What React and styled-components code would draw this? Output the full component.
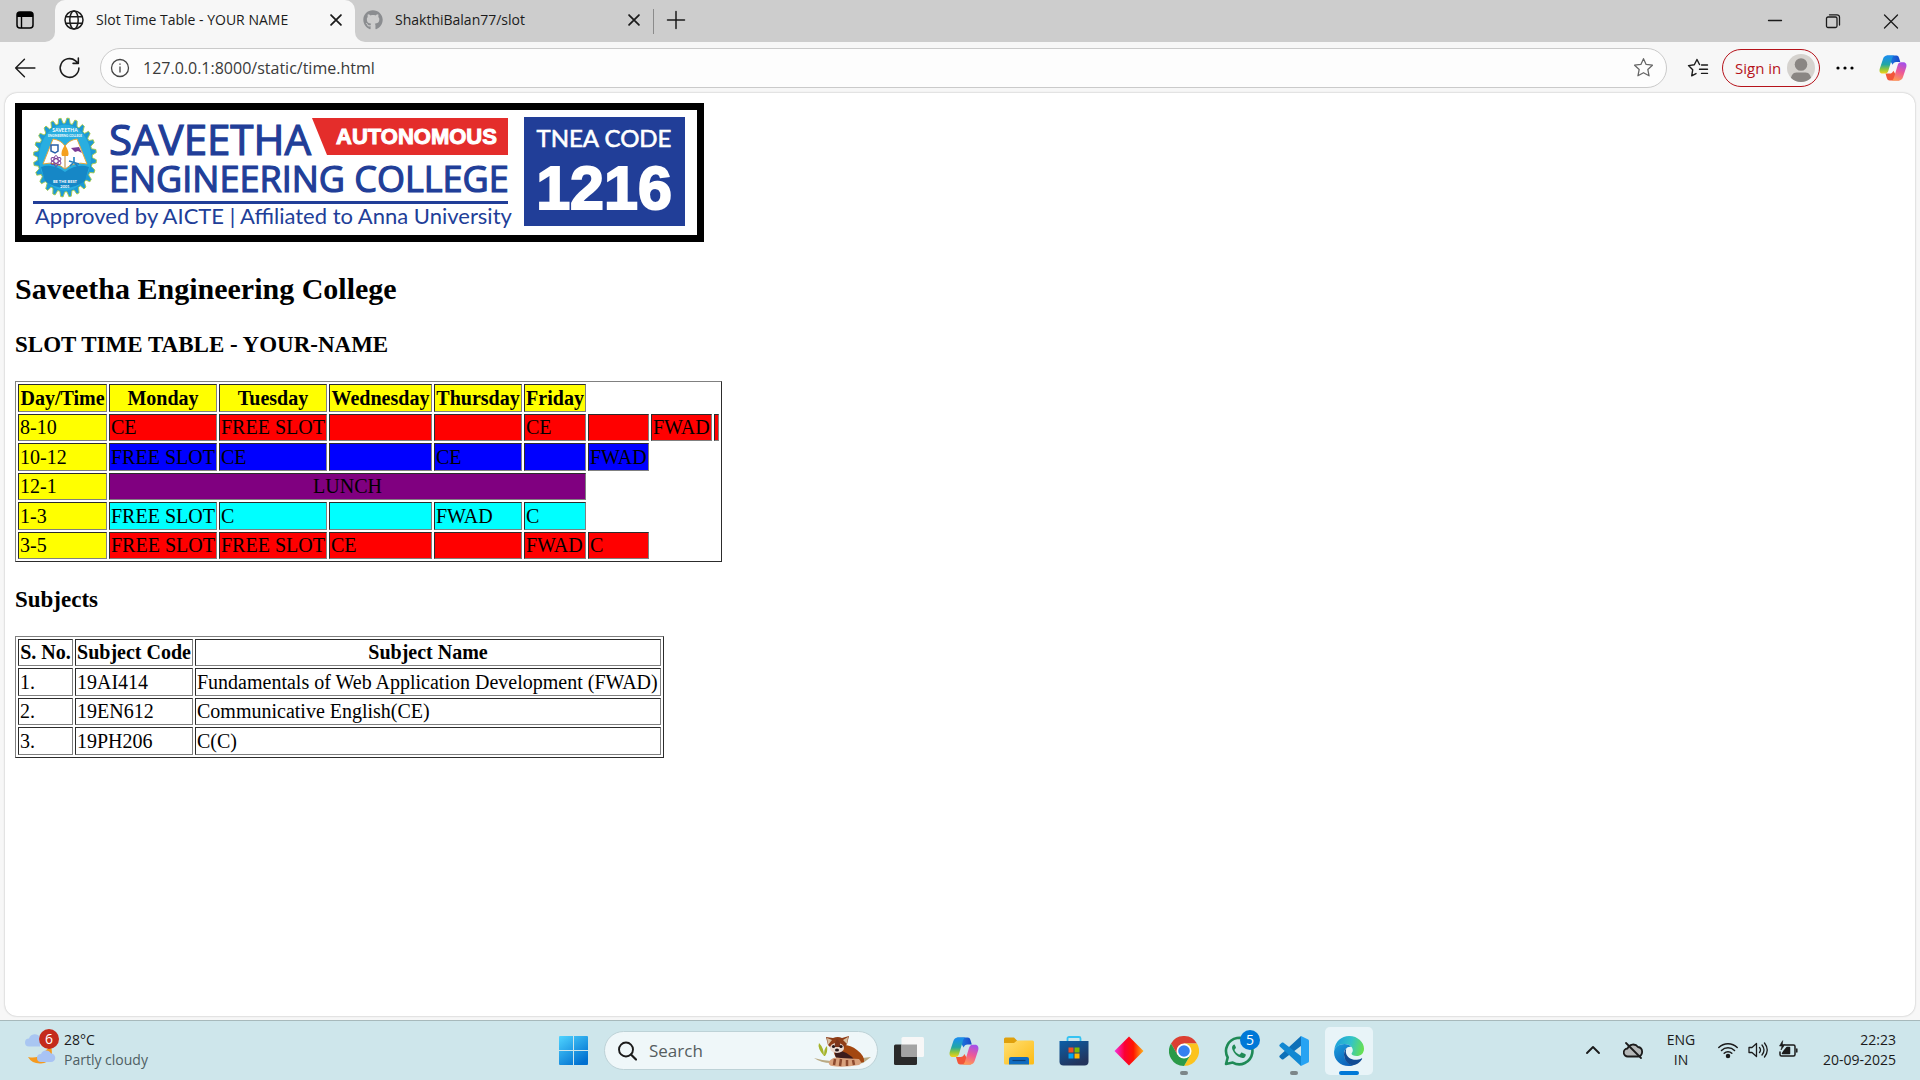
import React from "react";
import styled, { createGlobalStyle } from "styled-components";
import { FaGithub } from "react-icons/fa";

const UI_FONT = '"Open Sans", "Noto Sans", sans-serif';

const GlobalStyle = createGlobalStyle`
  *, *::before, *::after { box-sizing: border-box; }
  body { margin: 0; background: #f7f7f7; }
  button { border: 0; padding: 0; background: none; font: inherit; color: inherit; }
  svg { display: block; flex: none; }
`;

const Screen = styled.div`
  min-height: 100vh;
  display: flex;
  flex-direction: column;
  font-family: ${UI_FONT};
  color: #1b1b1b;
`;

/* ---------- Browser frame ---------- */

const TabStrip = styled.header`
  display: flex;
  height: 42px;
  background: #f7f7f7;
  font-size: 14px;
`;

const TabActions = styled.div`
  width: 55px;
  display: flex;
  align-items: center;
  padding: 0 16px 2px;
  background: #cdcdcd;
  border-bottom-right-radius: 10px;
`;

const ActiveTabSlot = styled.div`
  width: 300px;
  background: linear-gradient(#cdcdcd 50%, #f7f7f7 50%);
`;

const Tab = styled.div`
  display: flex;
  align-items: center;
  height: 42px;
  width: ${(p) => (p.$active ? "300px" : "298px")};
  padding: 0 8px 2px ${(p) => (p.$active ? "9px" : "8px")};
  background: ${(p) => (p.$active ? "#f7f7f7" : "transparent")};
  border-radius: 10px 10px 0 0;
`;

const TabTitle = styled.span`
  flex: 1;
  margin-left: 12px;
  padding-bottom: 2px;
  white-space: nowrap;
`;

const InactiveStrip = styled.div`
  flex: 1;
  display: flex;
  align-items: center;
  background: #cdcdcd;
  border-bottom-left-radius: 10px;
`;

const TabDivider = styled.span`
  width: 1px;
  height: 25px;
  background: #8b8b8b;
`;

const NewTab = styled.button`
  margin-left: 12px;
  padding-bottom: 2px;
`;

const WindowControls = styled.div`
  display: flex;
  margin-left: auto;
`;

const WindowButton = styled.button`
  width: 58px;
  height: 42px;
  display: grid;
  place-items: center;
`;

const Toolbar = styled.nav`
  display: flex;
  align-items: center;
  height: 51px;
  padding: 0 13px 0 14px;
  background: #f7f7f7;
`;

const NavButton = styled.button`
  width: 22px;
  height: 22px;
  margin-right: 22px;
  display: grid;
  place-items: center;
`;

const AddressBar = styled.label`
  flex: 1;
  display: flex;
  align-items: center;
  height: 40px;
  margin-left: -2px;
  padding: 0 12px 0 9px;
  background: #fdfdfd;
  border: 1px solid #cacaca;
  border-radius: 20px;
`;

const AddressInput = styled.input`
  flex: 1;
  min-width: 0;
  margin-left: 13px;
  padding: 0;
  border: 0;
  outline: 0;
  background: transparent;
  font-family: ${UI_FONT};
  font-size: 16px;
  color: #3a3a3a;
`;

const ToolbarEnd = styled.div`
  display: flex;
  align-items: center;
  margin-left: 20px;
`;

const SignIn = styled.button`
  display: flex;
  align-items: center;
  justify-content: space-between;
  width: 98px;
  height: 38px;
  margin: 0 16px 0 13px;
  padding: 0 4px 0 12px;
  border: 1px solid #b5131b;
  border-radius: 20px;
  font-size: 15px;
  color: #b5131b;
  white-space: nowrap;
`;

const MenuButton = styled.button`
  margin-right: 25px;
`;

/* ---------- Time table page ---------- */

const PageCard = styled.main`
  flex: 1;
  margin: 0 5px 4px;
  padding: 10px;
  background: #fff;
  border-radius: 12px;
  box-shadow: 0 0 2px rgba(0, 0, 0, 0.3);
  font-family: "Liberation Serif", "Times New Roman", serif;
  font-size: 20px;
  color: #000;
`;

const Banner = styled.figure`
  width: max-content;
  margin: 0;
  border: 7px solid #000;
`;

const PageTitle = styled.h2`
  margin: 30px 0 25px;
  font-size: 30px;
  line-height: 34px;
`;

const SectionTitle = styled.h3`
  margin: 24px 0 23px;
  font-size: 23px;
  line-height: 27px;
`;

const DataTable = styled.table`
  table-layout: fixed;
  width: ${(p) => p.$width}px;
  border: 1px solid;
  border-color: #808080 #2c2c2c #2c2c2c #808080;
  border-collapse: separate;
  border-spacing: 2px;
  line-height: 23px;
  white-space: nowrap;

  tr { height: 27px; }
  tr:nth-child(${(p) => p.$tall}) { height: 28px; }
`;

const Column = styled.col`
  width: ${(p) => p.$width}px;
`;

const cellBorder = `
  padding: 0 1px;
  border: 1px solid;
  border-color: #2c2c2c #808080 #808080 #2c2c2c;
`;

const HeadCell = styled.th`
  ${cellBorder}
  background: ${(p) => p.$fill || "transparent"};
`;

const Cell = styled.td`
  ${cellBorder}
  background: ${(p) => p.$fill || "transparent"};
  text-align: ${(p) => (p.$center ? "center" : "left")};
`;

/* ---------- Taskbar ---------- */

const Taskbar = styled.footer`
  display: grid;
  grid-template-columns: 1fr auto 1fr;
  align-items: center;
  height: 60px;
  padding-left: 2px;
  border-top: 1px solid #a7b9bb;
  background: #cee6eb;
  font-size: 14px;
  line-height: 20px;
`;

const Weather = styled.button`
  display: flex;
  gap: 8px;
  justify-self: start;
  margin-left: 23px;
  padding-bottom: 2px;
  text-align: left;
`;

const WeatherArt = styled.span`
  position: relative;
  width: 31px;
`;

const Badge = styled.span`
  position: absolute;
  top: ${(p) => p.$top}px;
  right: ${(p) => p.$right}px;
  width: 20px;
  height: 20px;
  border-radius: 50%;
  background: ${(p) => p.$fill};
  color: #fff;
  text-align: center;
`;

const Muted = styled.span`
  display: block;
  color: #4f6064;
`;

const TaskGroup = styled.div`
  display: flex;
  align-items: center;
  gap: 7px;
`;

const TaskButton = styled.button`
  position: relative;
  display: grid;
  place-items: center;
  width: 48px;
  height: 48px;
  border-radius: 5px;
  background: ${(p) => (p.$active ? "#e8f4f8" : "transparent")};

  &::after {
    content: "";
    display: ${(p) => (p.$running ? "block" : "none")};
    position: absolute;
    bottom: 0;
    left: 50%;
    width: ${(p) => (p.$active ? "20px" : "8px")};
    height: 4px;
    border-radius: 2px;
    transform: translateX(-50%);
    background: ${(p) => (p.$active ? "#0078d7" : "#7c8688")};
  }
`;

const SearchBox = styled.label`
  display: flex;
  align-items: center;
  width: 274px;
  height: 39px;
  padding: 0 4px 0 12px;
  border: 1px solid #bdd2d7;
  border-radius: 20px;
  background: #eff7f9;
`;

const SearchInput = styled.input`
  flex: 1;
  min-width: 0;
  margin-left: 12px;
  padding: 0;
  border: 0;
  outline: 0;
  background: transparent;
  font-family: ${UI_FONT};
  font-size: 17px;
  &::placeholder { color: #555d5f; opacity: 1; }
`;

const Tray = styled.div`
  display: flex;
  align-items: center;
  justify-self: end;
  padding: 0 24px 2px 0;
`;

const TrayButton = styled.button`
  display: grid;
  place-items: center;
  width: ${(p) => p.$width}px;
`;

const Clock = styled.time`
  width: 89px;
  text-align: right;
`;

/* ---------- Icons ---------- */

const Line = ({ size = 20, w = 1.4, children, color = "#1b1b1b" }) => (
  <svg width={size} height={size} viewBox="0 0 20 20" fill="none" stroke={color} strokeWidth={w} strokeLinecap="round" strokeLinejoin="round">
    {children}
  </svg>
);

const TabMenuIcon = () => (
  <svg width="18" height="18" viewBox="0 0 18 18">
    <rect x="1" y="1" width="16" height="16" rx="3" fill="none" stroke="#000" strokeWidth="1.5" />
    <path d="M1 6V4a3 3 0 0 1 3-3h10a3 3 0 0 1 3 3v2z" />
    <path d="M5.5 5v12" stroke="#000" strokeWidth="1.4" />
  </svg>
);

const GlobeIcon = () => (
  <Line w={1.5}>
    <circle cx="10" cy="10" r="9" />
    <ellipse cx="10" cy="10" rx="4.2" ry="9" />
    <path d="M1.8 6.8h16.4M1.8 13.2h16.4" />
  </Line>
);

const CrossIcon = ({ size = 20, w = 1.6 }) => (
  <Line size={size} w={w}><path d="M5.500 5.500l9 9M14.500 5.500l-9 9" /></Line>
);

const starPath = "M10 1.6l2.5 5.5 6 .7-4.4 4.1 1.2 6L10 15l-5.3 2.9 1.2-6L1.500 7.800l6-.7z";

const CopilotIcon = ({ size, id }) => (
  <svg width={size} height={size} viewBox="0 0 30 30">
    <defs>
      <linearGradient id={`${id}a`} x1="0" y1="0" x2="0" y2="1">
        <stop offset="0.1" stopColor="#1b90e8" /><stop offset="0.5" stopColor="#23a7a4" />
        <stop offset="0.75" stopColor="#8cc63e" /><stop offset="1" stopColor="#f5d21a" />
      </linearGradient>
      <linearGradient id={`${id}b`} x1="0.6" y1="0" x2="0.3" y2="1">
        <stop offset="0" stopColor="#a650e8" /><stop offset="0.5" stopColor="#ee5a96" />
        <stop offset="1" stopColor="#ff9b52" />
      </linearGradient>
      <linearGradient id={`${id}c`} x1="0" y1="0" x2="1" y2="0">
        <stop offset="0" stopColor="#1b8be6" /><stop offset="1" stopColor="#1a45c8" />
      </linearGradient>
    </defs>
    <path d="M8 1.500h10.500c2 0 2.600 1.300 3.100 3l1.200 4h-4.300c-2 0-3.200 1-3.800 3z" fill={`url(#${id}c)`} />
    <path d="M22 28.500H11.500c-2 0-2.700-1.300-3.200-3L7 21h4.500c2 0 3.200-1 3.800-3z" fill="#f2563a" />
    <path d="M9 1.500h7.500c-1.600.5-2.200 2-2.800 4l-3.600 12.200c-.7 2.300-1.700 3.300-3.800 3.300H4c-3 0-4-2.300-3.200-5.300L4.200 5.500C5 2.800 6.500 1.500 9 1.500z" fill={`url(#${id}a)`} />
    <path d="M21 28.500h-7.500c1.600-.5 2.200-2 2.800-4l3.600-12.200c.7-2.300 1.700-3.500 3.800-3.500H26c3 0 4 2.500 3.200 5.500l-3.400 10.200c-.8 2.700-2.300 4-4.800 4z" fill={`url(#${id}b)`} />
  </svg>
);

const RedPandaArt = () => (
  <svg width="60" height="34" viewBox="0 0 60 34">
    <path d="M1 24q16 5 30 2l27-3-8 6q-24 4-32 0Q8 29 1 24z" fill="#b9aa84" />
    <path d="M11 22Q4 14 6 9q5 5 5 13q0-8 3-10q1 6-2 10z" fill="#a5b42b" />
    <path d="M20 13q14-5 24 3q8 6 7 12q-14 4-25-1q-6-6-6-14z" fill="#a34710" />
    <path d="M22 16q14 1 20 11l-17-1q-4-4-3-10z" fill="#3c1c1c" />
    <path d="M16 28q3-6 12-4l18 1q4 4 0 6q-16 3-27 1q-4-1-3-4z" fill="#d9a17c" />
    <path d="M22 25l-1 6M28 25l-1 7M34 26v6M40 26l1 5" stroke="#8d4a2e" strokeWidth="2.500" />
    <path d="M13 3l7 1q5-2 9 0l7-2-2 8-4 5q-6 5-11 0l-4-4z" fill="#8e3d18" />
    <path d="M14 4l5 2-4 5zM35 3l-5 3 4 4z" fill="#d9c0a0" />
    <ellipse cx="24" cy="14" rx="7" ry="5" fill="#ead9d0" />
    <path d="M24 5q-3 4-2 8h5q1-5-3-8z" fill="#7c351c" />
    <circle cx="20.500" cy="12.500" r="1.600" fill="#26181b" /><circle cx="28" cy="12.500" r="1.600" fill="#26181b" />
    <ellipse cx="24" cy="16" rx="2" ry="1.500" fill="#26181b" />
  </svg>
);

const WindowsIcon = () => (
  <svg width="29" height="29" viewBox="0 0 29 29">
    <defs><linearGradient id="win" x1="0" y1="0" x2="0.7" y2="1"><stop offset="0" stopColor="#4fd4ff" /><stop offset="1" stopColor="#0070d0" /></linearGradient></defs>
    <path d="M1 0h13v14H0V1a1 1 0 0 1 1-1zM15 0h13a1 1 0 0 1 1 1v13H15zM0 15h14v14H1a1 1 0 0 1-1-1zM15 15h14v13a1 1 0 0 1-1 1H15z" fill="url(#win)" />
  </svg>
);

const TaskViewIcon = () => (
  <svg width="30" height="28" viewBox="0 0 30 28">
    <rect x="0" y="7.500" width="23" height="20.500" rx="1.500" fill="#2a2a2a" />
    <rect x="7.500" y="0" width="22.500" height="20" rx="1.500" fill="#f7f7f7" />
    <rect x="7.500" y="7.500" width="15.500" height="12.500" fill="#a3a3a3" />
  </svg>
);

const FolderIcon = () => (
  <svg width="30" height="28" viewBox="0 0 30 28">
    <defs><linearGradient id="fold" x1="0" y1="0" x2="1" y2="1"><stop offset="0" stopColor="#ffdf72" /><stop offset="1" stopColor="#fdbb13" /></linearGradient></defs>
    <path d="M0 2a1.500 1.500 0 0 1 1.500-1.500H10L13 3.500V10H0z" fill="#dfa00c" />
    <path d="M0 6h10l3-2.500h15.500A1.500 1.500 0 0 1 30 5v21a1.500 1.500 0 0 1-1.500 1.500h-27A1.500 1.500 0 0 1 0 26z" fill="url(#fold)" />
    <path d="M5 27.500V22a2 2 0 0 1 2-2h16a2 2 0 0 1 2 2v5.500z" fill="#0f6cc0" />
    <path d="M8.500 23.500h13" stroke="#0b3f78" strokeWidth="1.200" />
  </svg>
);

const StoreIcon = () => (
  <svg width="30" height="30" viewBox="0 0 30 30">
    <defs><linearGradient id="store" x1="0" y1="0" x2="0.500" y2="1"><stop offset="0" stopColor="#0b5fa8" /><stop offset="1" stopColor="#23345c" /></linearGradient></defs>
    <path d="M8.500 6V2.500a1.500 1.500 0 0 1 1.500-1.500h10a1.500 1.500 0 0 1 1.500 1.500V6" fill="none" stroke="#36c3f2" strokeWidth="1.800" />
    <path d="M.5 5h29v20.500a4 4 0 0 1-4 4h-21a4 4 0 0 1-4-4z" fill="url(#store)" />
    <path d="M9.500 11.500h5v5h-5z" fill="#f25022" /><path d="M15.500 11.500h5v5h-5z" fill="#7fba00" />
    <path d="M9.500 17.500h5v5h-5z" fill="#00a4ef" /><path d="M15.500 17.500h5v5h-5z" fill="#ffb900" />
  </svg>
);

const DiamondIcon = () => (
  <svg width="30" height="30" viewBox="0 0 30 30">
    <defs><linearGradient id="dia"><stop offset="0" stopColor="#f62fe0" /><stop offset="0.350" stopColor="#fb0034" /><stop offset="0.650" stopColor="#ff1500" /><stop offset="1" stopColor="#ffb21a" /></linearGradient></defs>
    <path d="M15 .5L29.500 15 15 29.500.5 15z" fill="url(#dia)" />
  </svg>
);

const ChromeIcon = () => (
  <svg width="30" height="30" viewBox="0 0 30 30">
    <path d="M2 7.500A15 15 0 0 1 28 7.500H15L8.500 18.700z" fill="#dc3f32" />
    <path d="M28 7.500A15 15 0 0 1 15 30l6.500-11.200L15 7.500z" fill="#fcc31e" />
    <path d="M15 30A15 15 0 0 1 2 7.500l6.500 11.300H21.500z" fill="#2b9a48" />
    <circle cx="15" cy="15" r="7.500" fill="#fff" /><circle cx="15" cy="15" r="5.800" fill="#357ff0" />
  </svg>
);

const WhatsAppIcon = () => (
  <svg width="30" height="30" viewBox="0 0 30 30">
    <path d="M2 28l1.700-6.500A13.200 13.200 0 1 1 8.800 26.600z" fill="none" stroke="#1f8a56" strokeWidth="2.600" strokeLinejoin="round" />
    <path d="M10 8.500c-2 1-2.500 3-1.500 5.200 1.700 3.800 4.600 6.600 8.200 7.900 2.400.9 4.500 0 5-2.200.2-.8 0-1-.6-1.300l-2.800-1.400c-.6-.3-.9-.2-1.300.3l-1 1.200c-.5.400-.8.400-1.400.1-1.700-.9-3-2.200-3.900-3.800-.3-.6-.2-.9.200-1.300l.8-1c.3-.4.3-.7.1-1.200l-1-2.100c-.2-.4-.4-.5-.8-.4z" fill="#1f8a56" />
  </svg>
);

const VsCodeIcon = () => (
  <svg width="30" height="30" viewBox="0 0 30 30">
    <path d="M22 0L.8 19.500c-.6.600-.6 1.400 0 2l1.900 1.700c.5.500 1.200.5 1.800.1L22.500 9.500z" fill="#0e70b8" />
    <path d="M22 30L.8 10.500c-.6-.6-.6-1.400 0-2l1.900-1.700c.5-.5 1.200-.5 1.800-.1L22.500 20.500z" fill="#1288d2" />
    <path d="M22 0l6.700 3.200c.8.400 1.300 1 1.300 1.900v19.800c0 .9-.5 1.500-1.300 1.900L22 30z" fill="#27a3f3" />
  </svg>
);

const EdgeIcon = () => (
  <svg width="30" height="30" viewBox="0 0 30 30">
    <defs>
      <linearGradient id="edA" x1="0" y1="0.300" x2="1" y2="0.500"><stop offset="0" stopColor="#1c9fdc" /><stop offset="0.550" stopColor="#33c4c8" /><stop offset="1" stopColor="#66e052" /></linearGradient>
      <linearGradient id="edB" x1="0" y1="0" x2="0.600" y2="1"><stop offset="0" stopColor="#1ba0de" /><stop offset="1" stopColor="#0c62ba" /></linearGradient>
    </defs>
    <path d="M.3 14C1 5.500 7.500 0 15.200 0 24 0 30 6.500 30 12.700c0 4.700-3.500 7.300-7.300 7.300-3.200 0-5.200-1.200-5.200-2.200 0-.8 1.300-1.300 1.300-3.500C18.800 10.500 15 8 10.500 8 5.500 8 1.500 11 .3 14z" fill="url(#edA)" />
    <path d="M.1 15.500C.5 11 5 8 10.500 8c3 0 5.500 1.200 7 3-4-1-7.500 2.500-7.500 7 0 6 4.500 10.500 9 11.400C8 32-.5 24.500.1 15.500z" fill="url(#edB)" />
    <path d="M12.500 12.300C8 16 9.500 27 18 29.600c4.500-.5 8-3 10-6.300.4-.8 0-1.300-.7-.9-6.300 3.300-14 .6-15.300-5.400-.3-1.700-.1-3.400.5-4.700z" fill="#114c94" />
  </svg>
);

/* ---------- College banner ---------- */

const BLUE = "#213e98";
const TEETH = 24;

// Outline of the crest's cog wheel, stretched to an upright oval.
const cogPoints = Array.from({ length: TEETH * 4 }, (_, i) => {
  const step = i % 4;
  const r = step === 1 || step === 2 ? 1 : 0.87;
  const a = ((i + (step % 2 ? -0.1 : 0.1)) / (TEETH * 4)) * Math.PI * 2;
  return `${(43 + Math.cos(a) * 31.500 * r).toFixed(1)},${(47.500 + Math.sin(a) * 39.500 * r).toFixed(1)}`;
}).join(" ");

const BOLD_FONT = '"Liberation Sans", Arial, sans-serif';
const SMALL_FONT = "Lato, sans-serif";

const CollegeBanner = () => (
  <svg width="675" height="125" viewBox="0 0 675 125" role="img" aria-label="Saveetha Engineering College">
    <polygon points={cogPoints} fill="#1c9ad6" stroke="#a6c84a" strokeWidth="0.900" />
    <ellipse cx="43" cy="47.500" rx="26" ry="33" fill="#29aee0" />
    <path d="M19 57q12-4 24 5q12-9 24-5l-4 14q-20 14-40 0z" fill="#1687c6" />
    <path d="M31 29q8 1 12 7q4-6 12-7l10 25q-13-3-22 5q-9-8-22-5z" fill="#fff" stroke="#e6a93c" strokeWidth="1" />
    <path d="M43 36v23" stroke="#c39a5a" strokeWidth="1.200" />
    <path d="M43 35q-5 7-3 11h6q2-4-3-11z" fill="#f5a01d" />
    <path d="M29 35h7v6l-3 2-4-2z" fill="none" stroke="#285fa8" strokeWidth="1.500" />
    <path d="M49 38l8-1 3 6-4-2-3 1z" fill="#7a3c96" />
    <g fill="none" stroke="#7a3c96" strokeWidth="0.900">
      <ellipse cx="34" cy="51" rx="5.500" ry="2.200" transform="rotate(30 34 51)" /><ellipse cx="34" cy="51" rx="5.500" ry="2.200" transform="rotate(90 34 51)" /><ellipse cx="34" cy="51" rx="5.500" ry="2.200" transform="rotate(150 34 51)" />
    </g>
    <path d="M47 51l10 3M52 47v5l4 5M52 52l-4 4" stroke="#2281c2" strokeWidth="1.600" fill="none" />
    <g fill="#fff" textAnchor="middle" fontFamily={SMALL_FONT} fontWeight="700">
      <text x="43" y="22" fontSize="5">SAVEETHA</text>
      <text x="43" y="27" fontSize="3">ENGINEERING COLLEGE</text>
      <text x="43" y="73" fontSize="4">BE THE BEST</text>
      <text x="43" y="78" fontSize="4">2001</text>
    </g>
    <g fill={BLUE} fontFamily={UI_FONT}>
      <g stroke={BLUE} strokeWidth="1.200">
        <text x="87" y="45" fontSize="42">SAVEETHA</text>
        <text x="87" y="82" fontSize="36">ENGINEERING COLLEGE</text>
      </g>
      <text x="13" y="114" fontSize="22" fontFamily={SMALL_FONT}>Approved by AICTE | Affiliated to Anna University</text>
    </g>
    <path d="M290 8h196v37H305z" fill="#e42d2b" />
    <text x="314" y="34" fontSize="22" fontWeight="700" fill="#fff" stroke="#fff" strokeWidth="1" fontFamily={BOLD_FONT}>AUTONOMOUS</text>
    <path d="M11 91h475v3H11z" fill={BLUE} />
    <path d="M502 7h161v109H502z" fill={BLUE} />
    <g fill="#fff" stroke="#fff" textAnchor="middle">
      <text x="582" y="37" fontSize="24" strokeWidth="0.600" fontFamily={SMALL_FONT}>TNEA CODE</text>
      <text x="582" y="99" fontSize="61" fontWeight="700" strokeWidth="2" fontFamily={BOLD_FONT}>1216</text>
    </g>
  </svg>
);

/* ---------- Data ---------- */

const SLOT_COLUMNS = [89, 108, 108, 103, 88, 62, 61, 61, 5];
const DAYS = ["Day/Time", "Monday", "Tuesday", "Wednesday", "Thursday", "Friday"];
const SLOTS = [
  { time: "8-10", fill: "#ff0000", cells: ["CE", "FREE SLOT", "", "", "CE", "", "FWAD", ""] },
  { time: "10-12", fill: "#0000ff", cells: ["FREE SLOT", "CE", "", "CE", "", "FWAD"] },
  { time: "12-1", fill: "#800080", lunch: true },
  { time: "1-3", fill: "#00ffff", cells: ["FREE SLOT", "C", "", "FWAD", "C"] },
  { time: "3-5", fill: "#ff0000", cells: ["FREE SLOT", "FREE SLOT", "CE", "", "FWAD", "C"] },
];
const SUBJECT_COLUMNS = [55, 118, 466];
const SUBJECTS = [
  ["1.", "19AI414", "Fundamentals of Web Application Development (FWAD)"],
  ["2.", "19EN612", "Communicative English(CE)"],
  ["3.", "19PH206", "C(C)"],
];

function BrowserChrome() {
  return (
    <>
      <TabStrip>
        <TabActions><button aria-label="Tab actions"><TabMenuIcon /></button></TabActions>
        <ActiveTabSlot>
          <Tab $active>
            <GlobeIcon />
            <TabTitle>Slot Time Table - YOUR NAME</TabTitle>
            <button aria-label="Close tab"><CrossIcon size={22} /></button>
          </Tab>
        </ActiveTabSlot>
        <InactiveStrip>
          <Tab>
            <FaGithub size={20} color="#8b8d90" />
            <TabTitle>ShakthiBalan77/slot</TabTitle>
            <button aria-label="Close tab"><CrossIcon size={22} /></button>
          </Tab>
          <TabDivider />
          <NewTab aria-label="New tab"><Line w={1.500}><path d="M10 1.500v17M1.500 10h17" /></Line></NewTab>
          <WindowControls>
            <WindowButton aria-label="Minimize"><Line w={1.300}><path d="M3.500 9.500h13" /></Line></WindowButton>
            <WindowButton aria-label="Restore"><Line w={1.300}><rect x="3.500" y="6" width="10.500" height="10.500" rx="1.500" /><path d="M6.500 3.800h7.500a2.500 2.500 0 0 1 2.500 2.500V14" /></Line></WindowButton>
            <WindowButton aria-label="Close"><Line w={1.300}><path d="M3.500 4l13 13M16.500 4l-13 13" /></Line></WindowButton>
          </WindowControls>
        </InactiveStrip>
      </TabStrip>
      <Toolbar>
        <NavButton aria-label="Back"><Line size={22} w={1.300}><path d="M19 10H1.500M9.500 2L1.500 10l8 8" /></Line></NavButton>
        <NavButton aria-label="Refresh"><Line size={22} w={1.400}><path d="M19 10a8.500 8.500 0 1 1-3-6.500l2 2M18.500 1v4.800H13.700" /></Line></NavButton>
        <AddressBar>
          <Line color="#444" w={1.300}><circle cx="10" cy="10" r="8.500" /><path d="M10 9v5M10 6v.3" /></Line>
          <AddressInput aria-label="Address" defaultValue="127.0.0.1:8000/static/time.html" />
          <Line size={21} w={1.200} color="#666"><path d={starPath} /></Line>
        </AddressBar>
        <ToolbarEnd>
          <button aria-label="Favorites">
            <svg width="22" height="20" viewBox="0 0 22 20" fill="none" stroke="#1b1b1b" strokeWidth="1.400" strokeLinecap="round" strokeLinejoin="round">
              <path d="M12.500 6.500L10 1.500 7.300 6.700 1.500 7.600l4.200 4.200-1 6L9 15.600M14.500 7h6M12.500 11.200h8M14.500 15.400h6" />
            </svg>
          </button>
          <SignIn>
            Sign in
            <svg width="28" height="28" viewBox="0 0 28 28">
              <clipPath id="av"><circle cx="14" cy="14" r="14" /></clipPath>
              <g clipPath="url(#av)"><path d="M0 0h28v28H0z" fill="#d5d2ce" /><circle cx="14" cy="10.500" r="6.300" fill="#8a8683" /><path d="M3.500 28q0-9.500 6-9.500h9q6 0 6 9.500z" fill="#8a8683" /></g>
            </svg>
          </SignIn>
          <MenuButton aria-label="Settings and more"><svg width="18" height="4" viewBox="0 0 18 4"><circle cx="2" cy="2" r="1.600" /><circle cx="9" cy="2" r="1.600" /><circle cx="16" cy="2" r="1.600" /></svg></MenuButton>
          <button aria-label="Copilot"><CopilotIcon size={28} id="bar" /></button>
        </ToolbarEnd>
      </Toolbar>
    </>
  );
}

function TimeTablePage() {
  return (
    <PageCard>
      <Banner><CollegeBanner /></Banner>
      <PageTitle>Saveetha Engineering College</PageTitle>
      <SectionTitle>SLOT TIME TABLE - YOUR-NAME</SectionTitle>
      <DataTable $width={707} $tall="odd">
        <colgroup>{SLOT_COLUMNS.map((w, i) => <Column key={i} $width={w} />)}</colgroup>
        <tbody>
          <tr>{DAYS.map((d) => <HeadCell key={d} $fill="#ffff00">{d}</HeadCell>)}</tr>
          {SLOTS.map((s) => (
            <tr key={s.time}>
              <Cell $fill="#ffff00">{s.time}</Cell>
              {s.lunch
                ? <Cell $fill={s.fill} $center colSpan={5}>LUNCH</Cell>
                : s.cells.map((c, i) => <Cell key={i} $fill={s.fill}>{c}</Cell>)}
            </tr>
          ))}
        </tbody>
      </DataTable>
      <SectionTitle>Subjects</SectionTitle>
      <DataTable $width={649} $tall="even">
        <colgroup>{SUBJECT_COLUMNS.map((w) => <Column key={w} $width={w} />)}</colgroup>
        <tbody>
          <tr><HeadCell>S. No.</HeadCell><HeadCell>Subject Code</HeadCell><HeadCell>Subject Name</HeadCell></tr>
          {SUBJECTS.map((row) => <tr key={row[0]}>{row.map((c) => <Cell key={c}>{c}</Cell>)}</tr>)}
        </tbody>
      </DataTable>
    </PageCard>
  );
}

function WindowsTaskbar() {
  return (
    <Taskbar>
      <Weather>
        <WeatherArt>
          <svg width="31" height="36" viewBox="0 0 31 36">
            <path d="M26 16q4 16-10 17.500Q7 34 3 27q9 2 14-3 4-4 9-8z" fill="#f59a1e" />
            <path d="M4 16.500a4 4 0 0 1 0-8 6 6 0 0 1 11-1v9z" fill="#a9c6f2" />
            <path d="M16 32a4 4 0 0 1 0-8 5.500 5.500 0 0 1 10-.5 4 4 0 0 1 0 8.500z" fill="#a8c3f4" />
          </svg>
          <Badge $fill="#c42b1c" $top={-1} $right={-3}>6</Badge>
        </WeatherArt>
        <span>28°C<Muted>Partly cloudy</Muted></span>
      </Weather>
      <TaskGroup>
        <TaskButton aria-label="Start"><WindowsIcon /></TaskButton>
        <SearchBox>
          <Line w={1.900}><circle cx="9" cy="8.500" r="7" /><path d="M14 13.500l5 5" strokeWidth="2.200" /></Line>
          <SearchInput type="search" aria-label="Search" placeholder="Search" />
          <RedPandaArt />
        </SearchBox>
        <TaskButton aria-label="Task view"><TaskViewIcon /></TaskButton>
        <TaskButton aria-label="Copilot"><CopilotIcon size={30} id="task" /></TaskButton>
        <TaskButton aria-label="File Explorer"><FolderIcon /></TaskButton>
        <TaskButton aria-label="Store"><StoreIcon /></TaskButton>
        <TaskButton aria-label="Diamond"><DiamondIcon /></TaskButton>
        <TaskButton aria-label="Chrome" $running><ChromeIcon /></TaskButton>
        <TaskButton aria-label="WhatsApp"><WhatsAppIcon /><Badge $fill="#0078d7" $top={3} $right={3}>5</Badge></TaskButton>
        <TaskButton aria-label="Visual Studio Code" $running><VsCodeIcon /></TaskButton>
        <TaskButton aria-label="Edge" $running $active><EdgeIcon /></TaskButton>
      </TaskGroup>
      <Tray>
        <TrayButton $width={40} aria-label="Show hidden icons"><Line w={1.900}><path d="M4 13l6-6 6 6" /></Line></TrayButton>
        <TrayButton $width={40} aria-label="OneDrive">
          <Line w={1.800}><path d="M5 16.500a4 4 0 0 1-.5-8A6 6 0 0 1 15 7a4.800 4.800 0 0 1 0 9.500z" fill="#b5b8b8" /><path d="M3 3l15 15" /></Line>
        </TrayButton>
        <TrayButton $width={56} aria-label="Input language"><span>ENG<br />IN</span></TrayButton>
        <TrayButton $width={38} aria-label="Network">
          <Line w={1.500}><path d="M.8 7.500a13 13 0 0 1 18.400 0M3.500 10.500a9.200 9.200 0 0 1 13 0M6.200 13.300a5.400 5.400 0 0 1 7.600 0" /><circle cx="10" cy="16" r="1.500" fill="#1b1b1b" /></Line>
        </TrayButton>
        <TrayButton $width={22} aria-label="Volume">
          <Line w={1.300}><path d="M1 7.500v5h3l4.500 4V3.500L4 7.500zM11.500 7.500q2 2.500 0 5M14 5q4 5 0 10M16.500 3q5.500 7 0 14" /></Line>
        </TrayButton>
        <TrayButton $width={38} aria-label="Battery">
          <Line w={1.500}><path d="M7 5h8.500a1.500 1.500 0 0 1 1.500 1.500v8a1.500 1.500 0 0 1-1.500 1.500h-12A1.500 1.500 0 0 1 2 14.500V12M18.800 9v3" /><path d="M9 7.500h2.500v6h-7l2-3z" fill="#1b1b1b" /><path d="M4.500 1L1.500 6H4l-1 4 4-5.500H4.500z" fill="#1b1b1b" strokeWidth="0.600" /></Line>
        </TrayButton>
        <Clock>22:23<br />20-09-2025</Clock>
      </Tray>
    </Taskbar>
  );
}

export default function App() {
  return (
    <Screen>
      <GlobalStyle />
      <BrowserChrome />
      <TimeTablePage />
      <WindowsTaskbar />
    </Screen>
  );
}
